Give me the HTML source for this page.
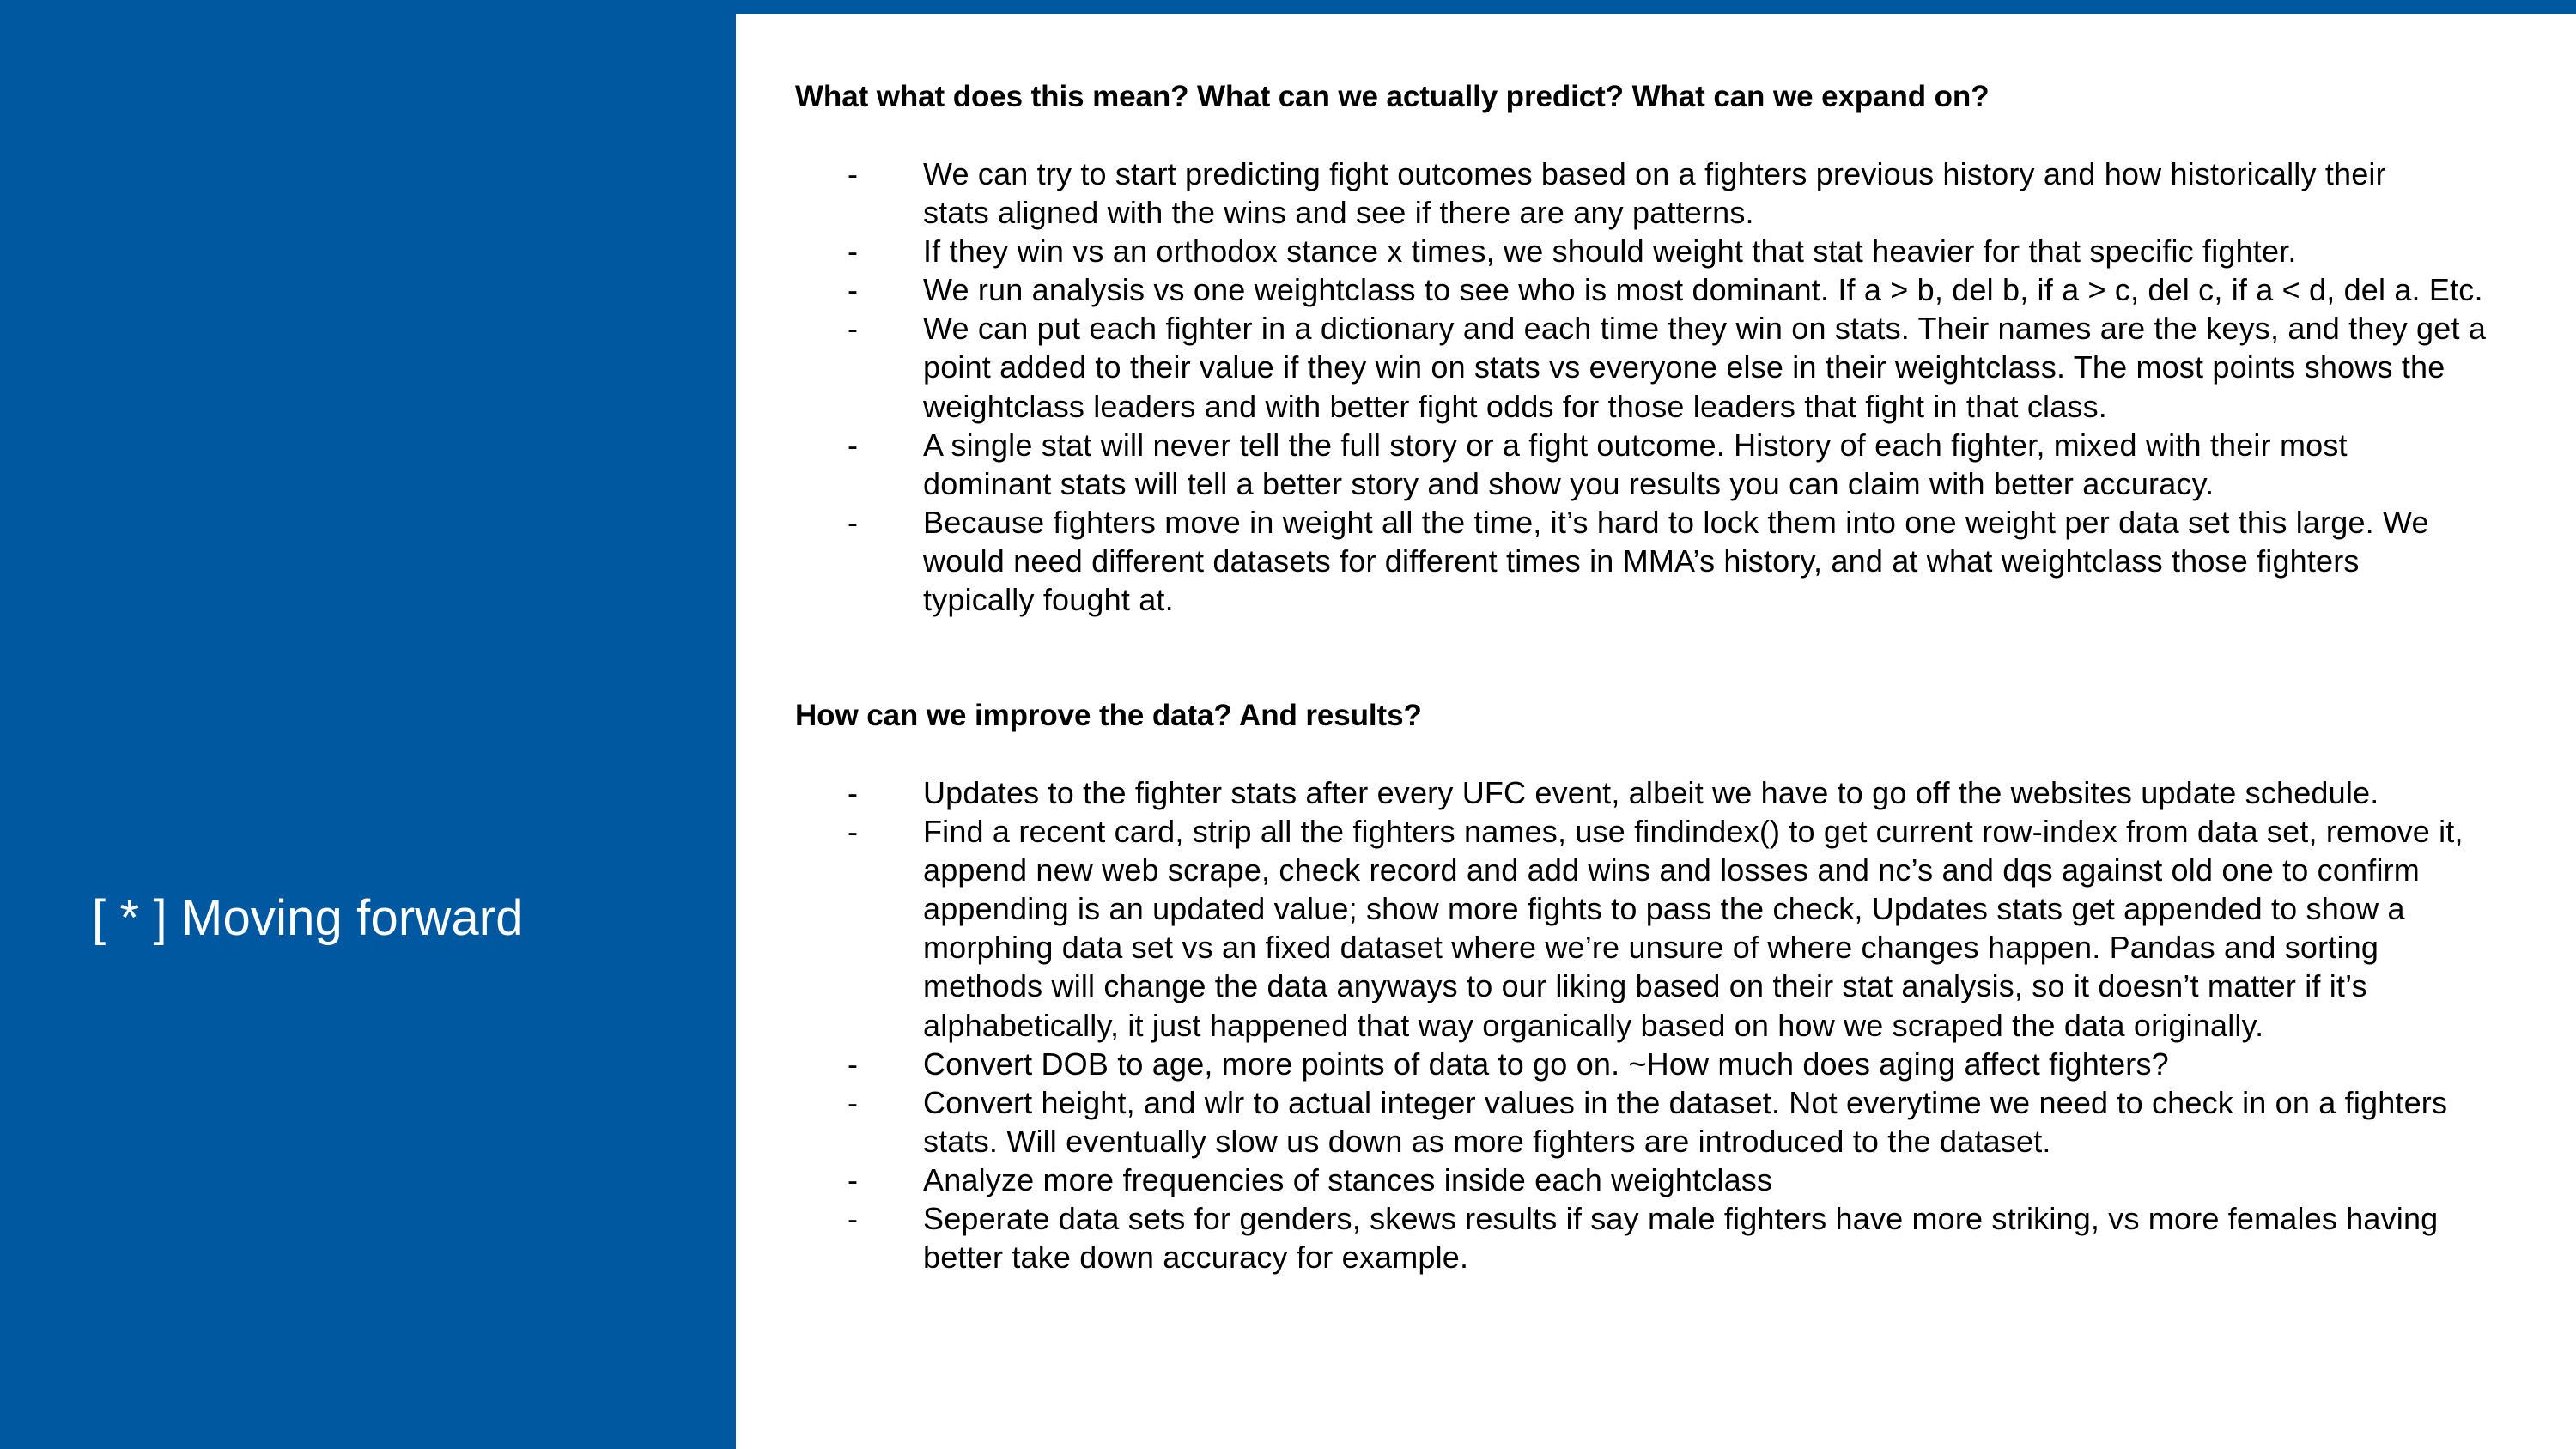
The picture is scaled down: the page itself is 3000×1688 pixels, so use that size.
<!DOCTYPE html>
<html><head><meta charset="utf-8"><style>
html,body{margin:0;padding:0}
body{width:3000px;height:1688px;position:relative;overflow:hidden;background:#fff;font-family:"Liberation Sans",sans-serif}
.left{position:absolute;left:0;top:0;width:857px;height:1688px;background:#0059a0}
.top{position:absolute;left:0;top:0;width:3000px;height:16px;background:#0059a0}
.title{position:absolute;left:107px;top:1032px;font-size:58px;color:#fff;line-height:76px;white-space:nowrap;letter-spacing:0.15px}
.content{position:absolute;left:926px;top:90px;width:2060px;font-size:36px;line-height:45.07px;color:#000;letter-spacing:0.18px}
.h{font-weight:bold;white-space:nowrap;letter-spacing:-0.1px;font-size:35px}
.b{height:45.07px}
.li{position:relative;padding-left:149px;white-space:nowrap}
.li::before{content:"-";position:absolute;left:61px;top:0}
</style></head><body>
<div class="left"></div><div class="top"></div>
<div class="title">[ * ] Moving forward</div>
<div class="content">
<div class="h">What what does this mean? What can we actually predict? What can we expand on?</div>
<div class="b"></div>
<div class="li">We can try to start predicting fight outcomes based on a fighters previous history and how historically their<br>stats aligned with the wins and see if there are any patterns.</div>
<div class="li">If they win vs an orthodox stance x times, we should weight that stat heavier for that specific fighter.</div>
<div class="li">We run analysis vs one weightclass to see who is most dominant. If a &gt; b, del b, if a &gt; c, del c, if a &lt; d, del a. Etc.</div>
<div class="li">We can put each fighter in a dictionary and each time they win on stats. Their names are the keys, and they get a<br>point added to their value if they win on stats vs everyone else in their weightclass. The most points shows the<br>weightclass leaders and with better fight odds for those leaders that fight in that class.</div>
<div class="li">A single stat will never tell the full story or a fight outcome. History of each fighter, mixed with their most<br>dominant stats will tell a better story and show you results you can claim with better accuracy.</div>
<div class="li">Because fighters move in weight all the time, it’s hard to lock them into one weight per data set this large. We<br>would need different datasets for different times in MMA’s history, and at what weightclass those fighters<br>typically fought at.</div>
<div class="b"></div><div class="b"></div>
<div class="h">How can we improve the data? And results?</div>
<div class="b"></div>
<div class="li">Updates to the fighter stats after every UFC event, albeit we have to go off the websites update schedule.</div>
<div class="li">Find a recent card, strip all the fighters names, use findindex() to get current row-index from data set, remove it,<br>append new web scrape, check record and add wins and losses and nc’s and dqs against old one to confirm<br>appending is an updated value; show more fights to pass the check, Updates stats get appended to show a<br>morphing data set vs an fixed dataset where we’re unsure of where changes happen. Pandas and sorting<br>methods will change the data anyways to our liking based on their stat analysis, so it doesn’t matter if it’s<br>alphabetically, it just happened that way organically based on how we scraped the data originally.</div>
<div class="li">Convert DOB to age, more points of data to go on. ~How much does aging affect fighters?</div>
<div class="li">Convert height, and wlr to actual integer values in the dataset. Not everytime we need to check in on a fighters<br>stats. Will eventually slow us down as more fighters are introduced to the dataset.</div>
<div class="li">Analyze more frequencies of stances inside each weightclass</div>
<div class="li">Seperate data sets for genders, skews results if say male fighters have more striking, vs more females having<br>better take down accuracy for example.</div>
</div>
</body></html>
